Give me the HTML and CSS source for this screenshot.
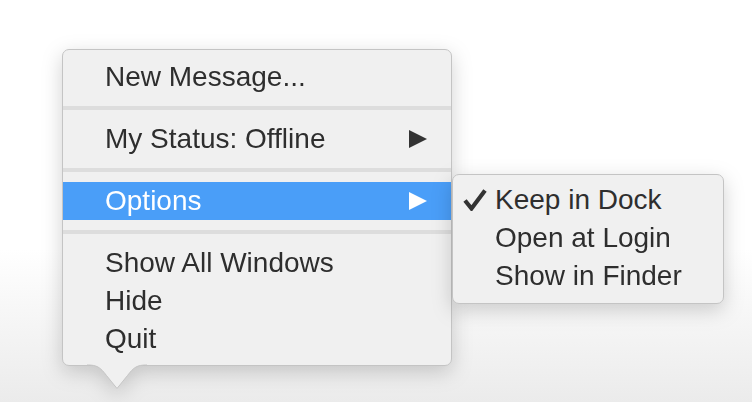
FILE: index.html
```html
<!DOCTYPE html>
<html lang="en">
<head>
    <meta charset="UTF-8">
    <title>Dock Menu</title>
    <link rel="stylesheet" href="styles.css">
</head>
<body>
    <div class="stage">
        <div class="menu">
            <div class="item">New Message...</div>
            <div class="sep"></div>
            <div class="item has-sub">My Status: Offline <span class="arrow"></span></div>
            <div class="sep"></div>
            <div class="item has-sub active">Options <span class="arrow"></span></div>
            <div class="sep"></div>
            <div class="item">Show All Windows</div>
            <div class="item">Hide</div>
            <div class="item">Quit</div>

            <!-- pointer to the dock icon -->
            <svg class="tail" width="60" height="26" viewBox="0 0 60 26">
                <path d="M0 0 L0 1 C10 1 13 3 19.5 11.5 L30 24.5 L40.5 11.5 C47 3 50 1 60 1 L60 0 Z" fill="#f0f0f0"/>
                <path d="M0 1 C10 1 13 3 19.5 11.5 L30 24.5 L40.5 11.5 C47 3 50 1 60 1" fill="none" stroke="#c4c4c4" stroke-width="1"/>
            </svg>
        </div>

        <div class="menu submenu">
            <div class="item">
                <svg class="check" width="24" height="23" viewBox="0 0 24 23">
                    <path d="M2 12.5 L8.5 20.5 L22 2.5" fill="none" stroke="#333" stroke-width="4.2"/>
                </svg>
                Keep in Dock
            </div>
            <div class="item">Open at Login</div>
            <div class="item">Show in Finder</div>
        </div>
    </div>
</body>
</html>
```

FILE: styles.css
```css
body {
    margin: 0;
    height: 402px;
    overflow: hidden;
    font-family: "Liberation Sans", Arial, sans-serif;
    background: linear-gradient(to bottom, #ffffff 0%, #ffffff 62%, #ebebeb 100%);
}
.stage {
    display: flex;
    align-items: flex-start;
    padding: 49px 0 0 62px;
}
.menu {
    position: relative;
    width: 390px;
    box-sizing: border-box;
    padding: 8px 0 7px;
    background-color: #f0f0f0;
    border: 1px solid #c4c4c4;
    border-radius: 7px;
    filter: drop-shadow(0 6px 10px rgba(0, 0, 0, 0.18));
}
.submenu {
    width: 272px;
    margin-top: 125px;
    padding: 6px 0 8px;
    z-index: 2;
}
.item {
    display: flex;
    align-items: center;
    height: 38px;
    padding: 0 24px 0 42px;
    font-size: 28px;
    color: #2e2e2e;
    white-space: nowrap;
}
.item.active {
    background-color: #4a9ef8;
    color: white;
}
.has-sub {
    justify-content: space-between;
}
.arrow {
    width: 0;
    height: 0;
    border-top: 9px solid transparent;
    border-bottom: 9px solid transparent;
    border-left: 18px solid #333;
}
.active .arrow {
    border-left-color: white;
}
.sep {
    height: 4px;
    margin: 10px 0;
    background-color: #dddddd;
}
.submenu .item {
    position: relative;
}
.check {
    position: absolute;
    left: 10px;
    top: 7px;
}
.tail {
    position: absolute;
    left: 24px;
    top: 100%;
    margin-top: -1px;
    display: block;
}
```
